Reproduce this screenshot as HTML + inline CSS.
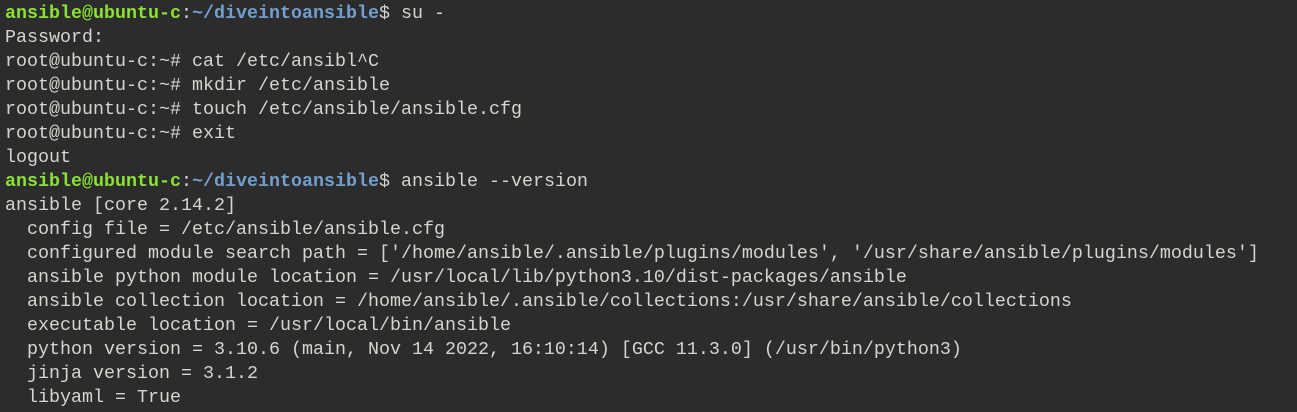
<!DOCTYPE html>
<html><head><style>
html,body{margin:0;padding:0;background:#2c2c2c;width:1297px;height:412px;overflow:hidden}
pre{margin:0;padding:2px 0 0 5px;font-family:"Liberation Mono",monospace;font-size:18.33px;line-height:24px;color:#d3d7cf;white-space:pre}
.g{color:#8ae234;font-weight:bold}.b{color:#729fcf;font-weight:bold}
</style></head><body><pre><span class="g">ansible@ubuntu-c</span>:<span class="b">~/diveintoansible</span>$ su -
Password:
root@ubuntu-c:~# cat /etc/ansibl^C
root@ubuntu-c:~# mkdir /etc/ansible
root@ubuntu-c:~# touch /etc/ansible/ansible.cfg
root@ubuntu-c:~# exit
logout
<span class="g">ansible@ubuntu-c</span>:<span class="b">~/diveintoansible</span>$ ansible --version
ansible [core 2.14.2]
  config file = /etc/ansible/ansible.cfg
  configured module search path = ['/home/ansible/.ansible/plugins/modules', '/usr/share/ansible/plugins/modules']
  ansible python module location = /usr/local/lib/python3.10/dist-packages/ansible
  ansible collection location = /home/ansible/.ansible/collections:/usr/share/ansible/collections
  executable location = /usr/local/bin/ansible
  python version = 3.10.6 (main, Nov 14 2022, 16:10:14) [GCC 11.3.0] (/usr/bin/python3)
  jinja version = 3.1.2
  libyaml = True</pre></body></html>
